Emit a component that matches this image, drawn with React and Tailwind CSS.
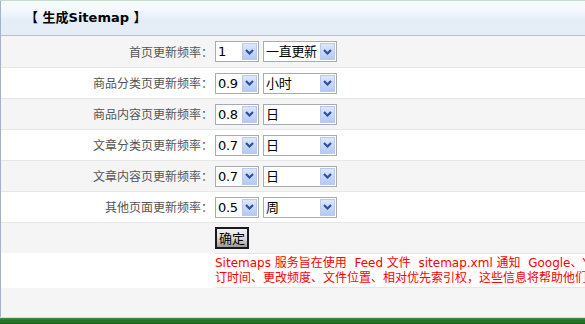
import React from 'react';

const rows = [
  { label: '首页更新频率：', pri: '1', freq: '一直更新' },
  { label: '商品分类页更新频率：', pri: '0.9', freq: '小时' },
  { label: '商品内容页更新频率：', pri: '0.8', freq: '日' },
  { label: '文章分类页更新频率：', pri: '0.7', freq: '日' },
  { label: '文章内容页更新频率：', pri: '0.7', freq: '日' },
  { label: '其他页面更新频率：', pri: '0.5', freq: '周' },
];

const Select = ({ value, width }) => (
  <div
    className="flex h-[21px] items-center border border-[#a5acb2] bg-white pl-[2px] pr-px"
    style={{ width }}
  >
    <span className="flex-1 overflow-hidden whitespace-nowrap text-[13px] leading-none tracking-[-0.3px] text-black">{value}</span>
    <div className="flex h-[17px] w-[15px] shrink-0 items-center justify-center border border-[#b9c9ef] bg-gradient-to-b from-[#dde8fd] to-[#b4c9f4]">
      <svg width="9" height="6" viewBox="0 0 9 6">
        <path d="M1 1 L4.5 4.5 L8 1" fill="none" stroke="#2f4f9f" strokeWidth="2.2" />
      </svg>
    </div>
  </div>
);

export default function App() {
  return (
    <div className="h-[324px] w-[585px] overflow-hidden bg-[#f5f5f5] font-['DejaVu_Sans','Noto_Sans_CJK_SC',sans-serif]">
      <div className="h-px bg-[#c6dccd]" />
      <div className="flex h-[316px] flex-col border-l border-[#9fb3cc]">
        {/* header */}
        <div className="flex h-[35px] items-center border-b border-[#b6c3cf] bg-[linear-gradient(to_bottom,#f7fbff_0px,#f5faff_7px,#eef5fc_12px,#e5edf7_18px,#e5edf7_100%)] pl-[24px]">
          <span className="text-[13px] font-bold text-black">【 生成Sitemap 】</span>
        </div>

        {rows.map((r, i) => (
          <div
            key={i}
            className={`flex items-center border-b border-[#e6e6e6] ${i === 0 ? 'h-[32px]' : 'h-[31px]'} ${i % 2 === 0 ? 'bg-[#f5f5f5]' : 'bg-white'}`}
          >
            <div className="w-[213px] pr-px text-right font-['Noto_Sans_CJK_SC',sans-serif] text-[12px] text-[#555]">{r.label}</div>
            <div className="flex gap-[4px] pl-[1px]">
              <Select value={r.pri} width="44px" />
              <Select value={r.freq} width="74px" />
            </div>
          </div>
        ))}

        {/* submit row */}
        <div className="flex h-[30px] items-center bg-[#f5f5f5]">
          <div className="w-[214px]" />
          <button className="flex h-[22px] w-[34px] items-center justify-center border-2 border-[#1a1a1a] bg-gradient-to-b from-[#f2f2f2] via-[#dcdcdc] to-[#9a9a9a] text-[13px] leading-none text-black">
            确定
          </button>
        </div>

        {/* notice row */}
        <div className="flex h-[35px] bg-white">
          <div className="w-[214px] shrink-0" />
          <div className="flex-1 overflow-hidden border-y border-[#e6e6e6] pt-[2px] text-[12px] leading-[15px] text-[#ff0000] whitespace-nowrap">
            <div>Sitemaps 服务旨在使用&nbsp; Feed 文件&nbsp; sitemap.xml 通知&nbsp; Google、Yahoo! 以及 Microsoft 等 Crawler(爬虫)您网站上有哪些文件需要索引、这些文件的最后修</div>
            <div>订时间、更改频度、文件位置、相对优先索引权，这些信息将帮助他们建立索引范围和索引的行为习惯。</div>
          </div>
        </div>

        <div className="flex-1 bg-[#f5f5f5]" />
      </div>
      <div className="h-[7px] bg-[linear-gradient(to_bottom,#cfe6cf_0px,#cfe6cf_1px,#3f8d3f_1px,#2f7a2f_3px,#1f6a1f_4px,#2c7c2c_5px,#175817_7px)]" />
    </div>
  );
}
